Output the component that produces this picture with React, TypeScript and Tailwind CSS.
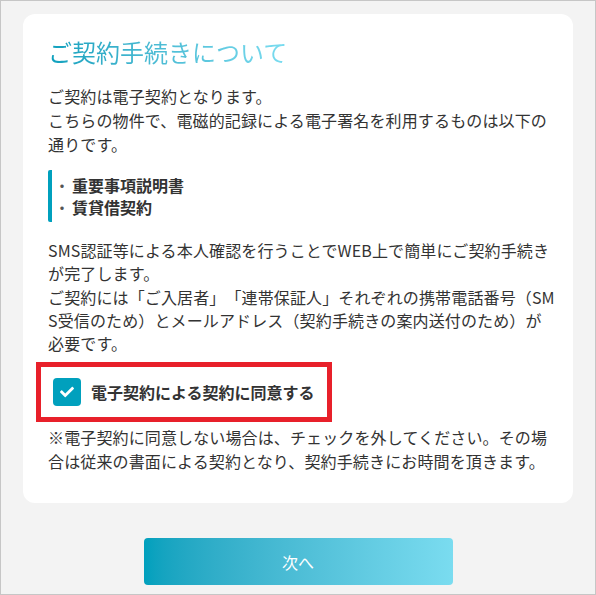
import { FaCheck } from "react-icons/fa";

const App = () => {
  return (
    <div
      className="w-[596px] h-[595px] border border-[#c6c6c6] bg-[#f3f3f3] text-[#333] overflow-hidden [text-spacing-trim:space-all]"
      style={{ fontFamily: '"Noto Sans CJK JP", "Noto Sans", sans-serif' }}
    >
      {/* Card */}
      <div className="mt-[13px] mx-auto w-[550px] rounded-xl bg-white pl-[25px] pr-[13px] pt-[22px] pb-[30px]">
        <h1 className="inline-block text-[24px] leading-[32px] font-normal bg-gradient-to-r from-[#0aa0bd] to-[#7adcf0] bg-clip-text text-transparent">
          ご契約手続きについて
        </h1>

        <p className="mt-4 text-[16px] leading-6 tracking-[0.13px] break-all">
          ご契約は電子契約となります。
          <br />
          こちらの物件で、電磁的記録による電子署名を利用するものは以下の通りです。
        </p>

        {/* Document list */}
        <ul className="mt-[14px] border-l-4 border-[#00a0bd] rounded-[2px] py-1 pl-[2px] text-[16px] leading-[22px]">
          <li className="flex">
            <span className="text-[#555]">・</span>
            <span className="font-bold ml-[2px]">重要事項説明書</span>
          </li>
          <li className="flex">
            <span className="text-[#555]">・</span>
            <span className="font-bold ml-[2px]">賃貸借契約</span>
          </li>
        </ul>

        <p className="mt-[17px] text-[16px] leading-[23.25px] tracking-[0.13px] break-all">
          SMS認証等による本人確認を行うことでWEB上で簡単にご契約手続きが完了します。
          <br />
          ご契約には「ご入居者」「連帯保証人」それぞれの携帯電話番号（SMS受信のため）とメールアドレス（契約手続きの案内送付のため）が
          <br />
          必要です。
        </p>

        {/* Consent checkbox */}
        <div className="mt-[7px] -ml-[12px] w-[296px] border-[5px] border-[#e8202a] px-3 py-[11px] flex items-center gap-[10px]">
          <span className="w-7 h-7 rounded-[4px] bg-[#00a0bd] flex items-center justify-center text-white">
            <FaCheck size={14} />
          </span>
          <span className="text-[16px] font-bold leading-6">電子契約による契約に同意する</span>
        </div>

        <p className="mt-[3px] text-[16px] leading-6 tracking-[0.13px] break-all">
          ※電子契約に同意しない場合は、チェックを外してください。その場合は従来の書面による契約となり、契約手続きにお時間を頂きます。
        </p>
      </div>

      {/* Next button */}
      <button className="block mt-[35px] mx-auto w-[309px] h-[47px] rounded-[4px] bg-gradient-to-r from-[#00a0bd] to-[#7adcf0] text-white text-[16px]">
        次へ
      </button>
    </div>
  );
};

export default App;
